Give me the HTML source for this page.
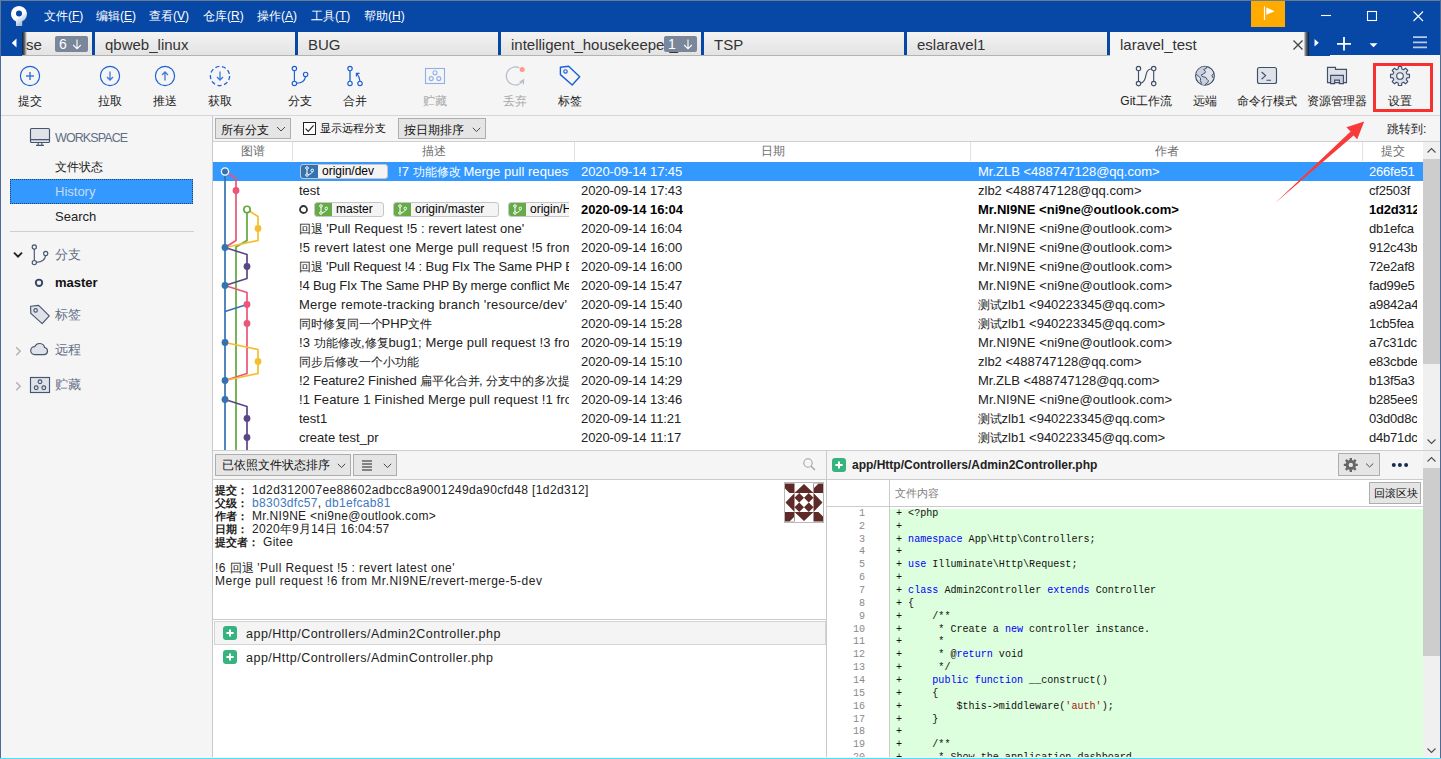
<!DOCTYPE html>
<html lang="zh">
<head>
<meta charset="utf-8">
<title>Sourcetree</title>
<style>
*{box-sizing:border-box;margin:0;padding:0}
html,body{width:1441px;height:759px;overflow:hidden;background:#f5f5f5}
body{position:relative;font-family:"Liberation Sans",sans-serif;font-size:13px;color:#222;line-height:1}
.abs,.abs-all *{position:absolute}
div,span,svg{position:absolute}
.t{white-space:nowrap}
/* frame */
#bL{left:0;top:0;width:1px;height:759px;background:linear-gradient(#687d90,#4d6b94 60px)}
#bR{left:1440px;top:0;width:1px;height:759px;background:#4d6b94}
#bT{left:0;top:0;width:1441px;height:1px;background:#687d90}
#bB{left:0;top:758px;width:1441px;height:1px;background:#48e4fb}
/* title */
#title{left:1px;top:1px;width:1439px;height:54px;background:#0747a6}
.menu{top:10px;color:#fff;font-size:12px;white-space:nowrap}
.menu u{text-decoration:underline;text-underline-offset:1px}
/* tabs */
.tab{top:32px;height:23px;width:200px;background:linear-gradient(#f3f3f3,#e3e3e3);overflow:hidden}
.tab .t{left:10px;top:5px;font-size:15px;color:#333}
.badge{top:4px;height:16px;background:#7a869a;border-radius:2px;color:#fff;font-size:13px}
/* toolbar */
#toolbar{left:1px;top:56px;width:1439px;height:59px;background:#f5f5f5}
.tl{top:95px;font-size:12px;color:#222;white-space:nowrap;transform:translateX(-50%)}
.tl.dis{color:#a8a8a8}
#tbline{left:1px;top:115px;width:1439px;height:1px;background:#d6d6d6}
/* sidebar */
.sb{left:55px;white-space:nowrap}
.sbh{color:#616e86;font-size:13px}
.ws{font-size:12.5px;letter-spacing:-0.9px}
/* list */
.dd{background:#e5e5e5;border:1px solid #adadad;font-size:12px;color:#111}
.hd{top:145px;font-size:12px;color:#6e6e6e;white-space:nowrap;transform:translateX(-50%)}
.r{left:213px;width:1210px;height:19px;font-size:13px;line-height:19px;color:#222}
.dt{letter-spacing:-.1px}
.ni{letter-spacing:.14px}
.bd .ni{letter-spacing:.04px}
.ch{letter-spacing:-.2px}
.r .t{top:0}
.r.sel{color:#fff}
.r.bd{font-weight:bold;color:#000}
i{font-style:normal;font-size:11.8px;display:inline-block;white-space:nowrap}
.cd{left:79px;top:0;width:277px;height:19px;overflow:hidden}
.ch{left:1149px;top:0;width:55px;height:19px;overflow:hidden}
.tg{top:2px;height:15px;background:#f4f4f4;border:1px solid #c6c6c6;border-radius:3px;overflow:hidden}
.tg b{position:absolute;left:-1px;top:-1px;width:18px;height:15px}
.tg .bi{left:4px;top:1px}
.tg em{position:absolute;font-style:normal;font-size:12px;font-weight:normal;color:#000;left:21px;top:0;line-height:13px;white-space:nowrap}
/* bottom */
.il{left:215px;font-size:11px;font-weight:bold;color:#222;white-space:nowrap;line-height:13px}
.iv{font-size:12px;color:#222;white-space:nowrap;line-height:13px;letter-spacing:.3px}
.iv a{color:#4078c0}
.iv i{font-size:12px}
.fn{font-size:12.5px;color:#222;letter-spacing:.49px}
.ln{left:0;width:38px;text-align:right;font-family:"Liberation Mono",monospace;font-size:10.08px;line-height:12.86px;color:#8a8a8a}
.cl{left:69px;font-family:"Liberation Mono",monospace;font-size:10.08px;line-height:12.86px;color:#111;white-space:pre}
k{color:#0000ff}
s{color:#a31515;text-decoration:none}
</style>
</head>
<body>
<!-- title bar -->
<div id="title"></div><div style="left:1px;top:55px;width:21px;height:1px;background:#0747a6"></div><div style="left:1309px;top:55px;width:21px;height:1px;background:#0747a6"></div>
<!-- logo -->
<svg style="left:10px;top:5px" width="20" height="22" viewBox="0 0 20 22"><defs><linearGradient id="lg" x1="0.3" y1="0" x2="0.9" y2="1"><stop offset="0.45" stop-color="#fff"/><stop offset="1" stop-color="#7f9fd2"/></linearGradient></defs><path d="M9 1a8 8 0 0 1 3.2 15.3V21H6V16.4A8 8 0 0 1 9 1Z" fill="url(#lg)"/><circle cx="9" cy="8.6" r="3" fill="#0747a6"/></svg>
<span class="menu" style="left:44px">文件(<u>F</u>)</span>
<span class="menu" style="left:96px">编辑(<u>E</u>)</span>
<span class="menu" style="left:149px">查看(<u>V</u>)</span>
<span class="menu" style="left:203px">仓库(<u>R</u>)</span>
<span class="menu" style="left:257px">操作(<u>A</u>)</span>
<span class="menu" style="left:311px">工具(<u>T</u>)</span>
<span class="menu" style="left:364px">帮助(<u>H</u>)</span>
<!-- flag + window buttons -->
<div style="left:1251px;top:1px;width:34px;height:26px;background:#ffab00"></div>
<svg style="left:1251px;top:1px" width="34" height="26" viewBox="0 0 34 26"><path d="M13.5 5.5V19" stroke="#fff" stroke-width="1.2" fill="none"/><path d="M15.3 6.6L23.6 10.2L15.3 13.8Z" fill="#fff"/></svg>
<svg style="left:1315px;top:5px" width="115" height="22" viewBox="0 0 115 22"><g stroke="#fff" stroke-width="1.1" fill="none"><path d="M6 10.5H16"/><rect x="52.5" y="6.5" width="9" height="9"/><path d="M98.5 6.5L108 16M108 6.5L98.5 16"/></g></svg>
<div class="tab" style="left:22px;width:70px"><span class="t" style="left:4px">se</span><span class="badge" style="left:33px;width:33px"></span><span class="t" style="left:37px;top:5px;font-size:14px;color:#fff">6</span><svg style="left:50px;top:7px" width="10" height="11" viewBox="0 0 10 11"><path d="M5 0.5V9.5M1.2 6L5 9.8L8.8 6" stroke="#fff" stroke-width="1.1" fill="none"/></svg></div>
<div style="left:22px;top:32px;width:5px;height:24px;background:linear-gradient(90deg,#111c2c,#4f5a68 45%,rgba(200,200,200,0))"></div>
<svg style="left:11px;top:38px" width="7" height="10" viewBox="0 0 7 10"><path d="M5.5 0.5V9.5L0.8 5Z" fill="#fff"/></svg>
<div class="tab" style="left:95px"><span class="t">qbweb_linux</span></div>
<div class="tab" style="left:298px"><span class="t">BUG</span></div>
<div class="tab" style="left:501px"><span class="t">intelligent_housekeeper_</span><span class="badge" style="left:163px;width:33px"></span><span class="t" style="left:167px;top:5px;font-size:14px;color:#fff">1</span><svg style="left:182px;top:7px" width="10" height="11" viewBox="0 0 10 11"><path d="M5 0.5V9.5M1.2 6L5 9.8L8.8 6" stroke="#fff" stroke-width="1.1" fill="none"/></svg></div>
<div class="tab" style="left:704px"><span class="t">TSP</span></div>
<div class="tab" style="left:907px"><span class="t">eslaravel1</span></div>
<div class="tab" style="left:1110px;width:195px;height:24px;background:#f5f5f5"><span class="t">laravel_test</span></div>
<div style="left:1304px;top:32px;width:5px;height:24px;background:linear-gradient(90deg,#dcdcdc,#5e6a7a 40%,#101b2c)"></div>
<svg style="left:1292px;top:39px" width="12" height="12" viewBox="0 0 12 12"><path d="M1.5 1.5L10.5 10.5M10.5 1.5L1.5 10.5" stroke="#444" stroke-width="1.3" fill="none"/></svg>
<svg style="left:1312px;top:34px" width="120" height="20" viewBox="0 0 120 20"><path d="M2.5 5V12.6L6.8 8.8Z" fill="#fff"/><path d="M25 9.8H39M32 3V16.6" stroke="#fff" stroke-width="1.8" fill="none"/><path d="M57.5 9.2H65.5L61.5 13.2Z" fill="#fff"/><path d="M101 3.2H115M101 8.3H115M101 13.3H115" stroke="#b9c9e6" stroke-width="1.8" fill="none"/></svg>
<!-- TOOLBAR -->
<div id="toolbar"></div>
<div id="tabline" style="left:22px;top:55px;width:1088px;height:1px;background:#b4b4b4"></div>
<svg id="tbicons" style="left:0;top:56px" width="1441" height="59" viewBox="0 56 1441 59" fill="none">
<g stroke="#1a5fd6" stroke-width="1.15">
<circle cx="30" cy="76" r="9.6"/><path d="M26 76H34M30 72V80" stroke="#3d78de" stroke-width="1.5"/>
<circle cx="110" cy="76" r="9.6"/><path d="M110 71.5V79.5M107 77L110 80L113 77" stroke="#3d78de" stroke-width="1.3"/>
<circle cx="165" cy="76" r="9.6"/><path d="M165 80.5V72.5M162 75L165 72L168 75" stroke="#3d78de" stroke-width="1.3"/>
<circle cx="220" cy="76" r="9.6" stroke-dasharray="4.1 2.6" stroke-width="1.3"/><path d="M220 71.5V79.5M217 77L220 80L223 77" stroke="#3d78de" stroke-width="1.3"/>
<circle cx="294.4" cy="68.6" r="2.2"/><circle cx="294.4" cy="83.4" r="2.2"/><circle cx="305.6" cy="74.4" r="2.2"/><path d="M294.4 70.8V81.2M296.6 83.3C301.5 83 305 80.5 305.5 76.6"/>
<circle cx="350" cy="68.6" r="2.2"/><circle cx="350" cy="83.4" r="2.2"/><circle cx="360" cy="83.4" r="2.2"/><path d="M350 70.8V81.2" stroke-width="1.6" stroke="#3d78de"/><path d="M360 81.2C359.6 78 358.6 75.6 356.9 73.6M356.4 76.6V73.3H359.6"/>
<path d="M560.4 67.2L568.6 66.3L579.7 76.7L572.2 85L560.4 74.6Z" stroke-width="1.4" stroke-linejoin="round"/><circle cx="565.5" cy="71.4" r="1.7"/>
</g>
<g stroke="#8fb0ea" stroke-width="1.1"><rect x="425.5" y="68.5" width="19" height="15"/><circle cx="435" cy="72.7" r="2"/><circle cx="431.2" cy="78.6" r="2"/><circle cx="438.8" cy="78.6" r="2"/></g>
<path d="M519.3 67.9A9 9 0 1 0 523.3 80.2M519.6 82.2L523.6 79.8L523.4 84.4" stroke="#b5bcc8" stroke-width="1.2"/><circle cx="522.2" cy="69.6" r="2.5" fill="#ff9a84"/>
<g stroke="#3f4f6c" stroke-width="1.15">
<circle cx="1138.5" cy="68.5" r="2.2"/><circle cx="1138.5" cy="83.6" r="2.2"/><circle cx="1153.7" cy="68.5" r="2.2"/><circle cx="1153.7" cy="83.6" r="2.2"/><path d="M1138.5 70.7V81.4M1153.7 70.7V81.4M1140.6 83.2C1148.8 81.4 1142.6 70.2 1151.5 68.8"/>
<circle cx="1205" cy="75.8" r="9.4" fill="#dfe2e9"/><path d="M1206.6 66.6L1206.2 68.5L1203.7 69.4L1205.5 71.6L1204.8 73.1L1201.1 75.1L1202.2 76.4L1205.9 77.5L1207 79.3L1208.5 80.8L1207.7 82.7L1204.8 85L1201.4 84.2L1200.3 80.5L1200.7 78.2L1199.2 76.8L1196.2 74.2A9.4 9.4 0 0 1 1206.6 66.6Z" fill="#cbd0dc" stroke="none"/><path d="M1206.6 66.6L1206.2 68.5L1203.7 69.4L1205.5 71.6L1204.8 73.1L1201.1 75.1L1202.2 76.4L1205.9 77.5L1207 79.3L1208.5 80.8L1207.7 82.7L1204.6 84.9M1196.2 74.2L1199.2 76.8L1200.7 78.2L1200.3 80.5L1201.6 83.6M1213.8 73.6L1211.8 75.3L1213 78" stroke-width="1"/>
<rect x="1257.5" y="67.5" width="19" height="16" rx="2" fill="#dfe2e9"/><path d="M1261.6 72L1265.6 75.6L1261.6 79.2M1266.5 80.2H1271"/>
<path d="M1327.5 82.6V67.4H1335.5V69.4H1346.5V82.6Z" fill="#dfe2e9"/><path d="M1330.6 83.6V75.4H1343.4V83.6H1339.4V80.1H1334.6V83.6Z" fill="#c9ceda"/>
<path id="gear" fill="#dfe2e9" stroke-linejoin="round" d="M1398.14 69.05L1398.42 66.53L1401.58 66.53L1401.86 69.05L1403.60 69.76L1405.57 68.18L1407.82 70.43L1406.24 72.40L1406.95 74.14L1409.47 74.42L1409.47 77.58L1406.95 77.86L1406.24 79.60L1407.82 81.57L1405.57 83.82L1403.60 82.24L1401.86 82.95L1401.58 85.47L1398.42 85.47L1398.14 82.95L1396.40 82.24L1394.43 83.82L1392.18 81.57L1393.76 79.60L1393.05 77.86L1390.53 77.58L1390.53 74.42L1393.05 74.14L1393.76 72.40L1392.18 70.43L1394.43 68.18L1396.40 69.76Z"/><circle cx="1400" cy="76" r="3.3" fill="#f5f5f5"/>
</g>
</svg>
<span class="tl" style="left:30px">提交</span><span class="tl" style="left:110px">拉取</span><span class="tl" style="left:165px">推送</span><span class="tl" style="left:220px">获取</span>
<span class="tl" style="left:300px">分支</span><span class="tl" style="left:355px">合并</span><span class="tl dis" style="left:435px">贮藏</span><span class="tl dis" style="left:515px">丢弃</span><span class="tl" style="left:570px">标签</span>
<span class="tl" style="left:1146px">Git工作流</span><span class="tl" style="left:1205px">远端</span><span class="tl" style="left:1267px">命令行模式</span><span class="tl" style="left:1337px">资源管理器</span><span class="tl" style="left:1400px">设置</span>
<div style="left:1373px;top:63px;width:60px;height:49px;border:3px solid #f93030"></div>
<div id="tbline"></div>
<div id="sbline" style="left:212px;top:116px;width:1px;height:641px;background:#c9c9c9"></div>
<svg style="left:0;top:116px" width="212" height="300" viewBox="0 116 212 300" fill="none">
<g stroke="#46556f" stroke-width="1.15">
<rect x="30.5" y="128.5" width="19" height="14" rx="1" fill="#dfe2e9"/><path d="M30.5 139.6H49.5M38.2 142.6V145.3M41.8 142.6V145.3M36 145.4H44"/>
<circle cx="34.3" cy="247" r="2.1"/><circle cx="34.3" cy="262.6" r="2.1"/><circle cx="45.7" cy="253.5" r="2.1"/><path d="M34.3 249.1V260.5M36.4 262.4C41.5 262 45 259.5 45.6 255.6"/>
<path d="M30.6 306.2L38.6 305.4L49.3 315.8L42.2 323.6L30.8 313.4Z" fill="#dfe2e9" stroke-linejoin="round"/><circle cx="35.6" cy="310.4" r="1.7" fill="#f5f5f5"/>
<path d="M34.6 354.6H44.4A3.6 3.6 0 0 0 44.6 347.5A5.2 5.2 0 0 0 34.8 346.6A4 4 0 0 0 34.6 354.6Z" fill="#dfe2e9"/>
<rect x="30.5" y="377.5" width="19" height="15" fill="#dfe2e9"/><circle cx="40" cy="381.8" r="1.9"/><circle cx="36.2" cy="387.8" r="1.9"/><circle cx="43.8" cy="387.8" r="1.9"/>
</g>
<path d="M14 252.6L18 256.6L22 252.6" stroke="#222" stroke-width="1.9"/>
<path d="M16.2 347.2L20.2 351.2L16.2 355.2M16.2 382.2L20.2 386.2L16.2 390.2" stroke="#b3b3b3" stroke-width="1.5"/>
<circle cx="39" cy="282.8" r="3.2" stroke="#344563" stroke-width="1.9"/>
</svg>
<span class="sb sbh ws" style="top:132px">WORKSPACE</span>
<span class="sb" style="top:161px;font-size:12px;color:#222">文件状态</span>
<div style="left:10px;top:179px;width:183px;height:25px;background:#3399ff;border:1px dotted #1f3f66"></div>
<span class="sb" style="top:185px;font-size:13px;color:#c9daf0">History</span>
<span class="sb" style="top:210px;font-size:13px;color:#222">Search</span>
<div style="left:10px;top:231px;width:184px;height:1px;background:#cfcfcf"></div>
<span class="sb sbh" style="top:248px">分支</span>
<span class="sb" style="top:276px;font-size:13px;font-weight:bold;color:#111">master</span>
<span class="sb sbh" style="top:308px">标签</span>
<span class="sb sbh" style="top:343px">远程</span>
<span class="sb sbh" style="top:378px">贮藏</span>
<!-- LIST-START -->
<div id="list" style="left:213px;top:116px;width:1227px;height:335px;background:#f5f5f5"></div>
<div id="listbg" style="left:213px;top:142px;width:1210px;height:308px;background:#fff"></div>
<div class="dd" style="left:215px;top:118px;width:76px;height:21px"><span class="t" style="left:5px;top:5px">所有分支</span><svg style="left:60px;top:7px" width="10" height="6" viewBox="0 0 10 6"><path d="M1 1L5 5L9 1" stroke="#484848" stroke-width="1" fill="none"/></svg></div>
<div style="left:303px;top:122px;width:13px;height:13px;background:#fff;border:1px solid #222"></div><svg style="left:303px;top:122px" width="13" height="13" viewBox="0 0 13 13"><path d="M2.6 6.6L5.2 9.4L10.6 3.4" stroke="#222" stroke-width="1.1" fill="none"/></svg>
<span class="t" style="left:320px;top:123px;font-size:11px;color:#111">显示远程分支</span>
<div class="dd" style="left:398px;top:118px;width:88px;height:21px"><span class="t" style="left:5px;top:5px">按日期排序</span><svg style="left:73px;top:8px" width="9" height="6" viewBox="0 0 9 6"><path d="M0.8 0.8L4.5 4.6L8.2 0.8" stroke="#484848" stroke-width="1" fill="none"/></svg></div>
<span class="t" style="left:1387px;top:123px;font-size:12px;color:#222">跳转到:</span>
<div style="left:213px;top:141px;width:1227px;height:1px;background:#d0d0d0"></div>
<div style="left:292px;top:142px;width:1px;height:19px;background:#e2e2e2"></div>
<div style="left:574px;top:142px;width:1px;height:19px;background:#e2e2e2"></div>
<div style="left:970px;top:142px;width:1px;height:19px;background:#e2e2e2"></div>
<div style="left:1362px;top:142px;width:1px;height:19px;background:#e2e2e2"></div>
<span class="hd" style="left:253px">图谱</span>
<span class="hd" style="left:434px">描述</span>
<span class="hd" style="left:773px">日期</span>
<span class="hd" style="left:1167px">作者</span>
<span class="hd" style="left:1393px">提交</span>
<div style="left:213px;top:162px;width:1210px;height:19px;background:#3399ff"></div>
<div class="r sel" style="top:162px"><div class="cd"><span class="tg" style="left:8px;width:88px"><b style="background:#3572b0"></b><svg class="bi" width="9" height="11" viewBox="0 0 9 11"><g fill="none" stroke="#fff" stroke-width="1"><circle cx="2" cy="2" r="1.3"/><circle cx="2" cy="9" r="1.3"/><circle cx="7.3" cy="4.4" r="1.3"/><path d="M2 3.3V7.7M3.2 8.6C5.6 8.2 7 7.2 7.3 5.7"/></g></svg><em>origin/dev</em></span><span class="t" style="left:106px;letter-spacing:.03px">!7 <i style="width:47.2px">功能修改</i> Merge pull request !7 from</span></div><span class="t dt" style="left:368px">2020-09-14 17:45</span><span class="t" style="left:765px">Mr.ZLB &lt;488747128@qq.com&gt;</span><div class="ch"><span class="t" style="left:7px">266fe51</span></div></div>
<div class="r" style="top:181px"><div class="cd"><span class="t" style="left:7px;letter-spacing:0px">test</span></div><span class="t dt" style="left:368px">2020-09-14 17:43</span><span class="t" style="left:765px">zlb2 &lt;488747128@qq.com&gt;</span><div class="ch"><span class="t" style="left:7px">cf2503f</span></div></div>
<div class="r bd" style="top:200px"><div class="cd"><svg style="left:6px;top:4px" width="11" height="11" viewBox="0 0 11 11"><circle cx="5.5" cy="5.5" r="3.5" fill="none" stroke="#333" stroke-width="1.8"/></svg><span class="tg" style="left:22px;width:70px"><b style="background:#65ab47"></b><svg class="bi" width="9" height="11" viewBox="0 0 9 11"><g fill="none" stroke="#fff" stroke-width="1"><circle cx="2" cy="2" r="1.3"/><circle cx="2" cy="9" r="1.3"/><circle cx="7.3" cy="4.4" r="1.3"/><path d="M2 3.3V7.7M3.2 8.6C5.6 8.2 7 7.2 7.3 5.7"/></g></svg><em>master</em></span><span class="tg" style="left:101px;width:106px"><b style="background:#65ab47"></b><svg class="bi" width="9" height="11" viewBox="0 0 9 11"><g fill="none" stroke="#fff" stroke-width="1"><circle cx="2" cy="2" r="1.3"/><circle cx="2" cy="9" r="1.3"/><circle cx="7.3" cy="4.4" r="1.3"/><path d="M2 3.3V7.7M3.2 8.6C5.6 8.2 7 7.2 7.3 5.7"/></g></svg><em>origin/master</em></span><span class="tg" style="left:216px;width:90px"><b style="background:#65ab47"></b><svg class="bi" width="9" height="11" viewBox="0 0 9 11"><g fill="none" stroke="#fff" stroke-width="1"><circle cx="2" cy="2" r="1.3"/><circle cx="2" cy="9" r="1.3"/><circle cx="7.3" cy="4.4" r="1.3"/><path d="M2 3.3V7.7M3.2 8.6C5.6 8.2 7 7.2 7.3 5.7"/></g></svg><em>origin/HEAD</em></span></div><span class="t dt" style="left:368px">2020-09-14 16:04</span><span class="t ni" style="left:765px">Mr.NI9NE &lt;ni9ne@outlook.com&gt;</span><div class="ch"><span class="t" style="left:7px">1d2d312</span></div></div>
<div class="r" style="top:219px"><div class="cd"><span class="t" style="left:7px;letter-spacing:0.025px"><i style="width:23.6px">回退</i> 'Pull Request !5 : revert latest one'</span></div><span class="t dt" style="left:368px">2020-09-14 16:04</span><span class="t ni" style="left:765px">Mr.NI9NE &lt;ni9ne@outlook.com&gt;</span><div class="ch"><span class="t" style="left:7px">db1efca</span></div></div>
<div class="r" style="top:238px"><div class="cd"><span class="t" style="left:7px;letter-spacing:0.246px">!5 revert latest one Merge pull request !5 from Mr.NI9NE</span></div><span class="t dt" style="left:368px">2020-09-14 16:00</span><span class="t ni" style="left:765px">Mr.NI9NE &lt;ni9ne@outlook.com&gt;</span><div class="ch"><span class="t" style="left:7px">912c43b</span></div></div>
<div class="r" style="top:257px"><div class="cd"><span class="t" style="left:7px;letter-spacing:-0.105px"><i style="width:23.6px">回退</i> 'Pull Request !4 : Bug FIx The Same PHP By merge</span></div><span class="t dt" style="left:368px">2020-09-14 16:00</span><span class="t ni" style="left:765px">Mr.NI9NE &lt;ni9ne@outlook.com&gt;</span><div class="ch"><span class="t" style="left:7px">72e2af8</span></div></div>
<div class="r" style="top:276px"><div class="cd"><span class="t" style="left:7px;letter-spacing:-0.129px">!4 Bug FIx The Same PHP By merge conflict Merge pull</span></div><span class="t dt" style="left:368px">2020-09-14 15:47</span><span class="t ni" style="left:765px">Mr.NI9NE &lt;ni9ne@outlook.com&gt;</span><div class="ch"><span class="t" style="left:7px">fad99e5</span></div></div>
<div class="r" style="top:295px"><div class="cd"><span class="t" style="left:7px;letter-spacing:0.24px">Merge remote-tracking branch 'resource/dev'</span></div><span class="t dt" style="left:368px">2020-09-14 15:40</span><span class="t" style="left:765px"><i style="width:23.6px">测试</i>zlb1 &lt;940223345@qq.com&gt;</span><div class="ch"><span class="t" style="left:7px">a9842a4</span></div></div>
<div class="r" style="top:314px"><div class="cd"><span class="t" style="left:7px;letter-spacing:0px"><i style="width:82.6px">同时修复同一个</i>PHP<i style="width:23.6px">文件</i></span></div><span class="t dt" style="left:368px">2020-09-14 15:28</span><span class="t" style="left:765px"><i style="width:23.6px">测试</i>zlb1 &lt;940223345@qq.com&gt;</span><div class="ch"><span class="t" style="left:7px">1cb5fea</span></div></div>
<div class="r" style="top:333px"><div class="cd"><span class="t" style="left:7px;letter-spacing:0.143px">!3 <i style="width:47.2px">功能修改</i>,<i style="width:23.6px">修复</i>bug1; Merge pull request !3 from Mr</span></div><span class="t dt" style="left:368px">2020-09-14 15:19</span><span class="t ni" style="left:765px">Mr.NI9NE &lt;ni9ne@outlook.com&gt;</span><div class="ch"><span class="t" style="left:7px">a7c31dc</span></div></div>
<div class="r" style="top:352px"><div class="cd"><span class="t" style="left:7px;letter-spacing:0px"><i style="width:118.0px">同步后修改一个小功能</i></span></div><span class="t dt" style="left:368px">2020-09-14 15:10</span><span class="t" style="left:765px">zlb2 &lt;488747128@qq.com&gt;</span><div class="ch"><span class="t" style="left:7px">e83cbde</span></div></div>
<div class="r" style="top:371px"><div class="cd"><span class="t" style="left:7px;letter-spacing:-0.085px">!2 Feature2 Finished <i style="width:59.0px">扁平化合并</i>, <i style="width:94.4px">分支中的多次提交</i></span></div><span class="t dt" style="left:368px">2020-09-14 14:29</span><span class="t" style="left:765px">Mr.ZLB &lt;488747128@qq.com&gt;</span><div class="ch"><span class="t" style="left:7px">b13f5a3</span></div></div>
<div class="r" style="top:390px"><div class="cd"><span class="t" style="left:7px;letter-spacing:0.12px">!1 Feature 1 Finished Merge pull request !1 from Mr</span></div><span class="t dt" style="left:368px">2020-09-14 13:46</span><span class="t ni" style="left:765px">Mr.NI9NE &lt;ni9ne@outlook.com&gt;</span><div class="ch"><span class="t" style="left:7px">b285ee9</span></div></div>
<div class="r" style="top:409px"><div class="cd"><span class="t" style="left:7px;letter-spacing:0px">test1</span></div><span class="t dt" style="left:368px">2020-09-14 11:21</span><span class="t" style="left:765px"><i style="width:23.6px">测试</i>zlb1 &lt;940223345@qq.com&gt;</span><div class="ch"><span class="t" style="left:7px">03d0d8c</span></div></div>
<div class="r" style="top:428px"><div class="cd"><span class="t" style="left:7px;letter-spacing:0px">create test_pr</span></div><span class="t dt" style="left:368px">2020-09-14 11:17</span><span class="t" style="left:765px"><i style="width:23.6px">测试</i>zlb1 &lt;940223345@qq.com&gt;</span><div class="ch"><span class="t" style="left:7px">d4b71dc</span></div></div>
<div style="left:1423px;top:142px;width:17px;height:308px;background:#f0f0f0"></div><div style="left:1423px;top:159px;width:17px;height:205px;background:#cdcdcd"></div>
<svg style="left:1423px;top:142px" width="17" height="308" viewBox="0 0 17 308"><path d="M4.5 10.5L8.5 6.5L12.5 10.5M4.5 297.5L8.5 301.5L12.5 297.5" stroke="#505050" stroke-width="1.1" fill="none"/></svg>
<div style="left:213px;top:450px;width:1227px;height:1px;background:#cfcfcf"></div>
<svg id="graph" style="left:213px;top:162px" width="79" height="288" viewBox="213 162 79 288" fill="none" stroke-width="1.7" stroke-linejoin="round">
<path d="M247 209.5V240.5L236 247.0V451" stroke="#5fa83c"/>
<path d="M225 171.5L236 178.5V240.5L225 247.5" stroke="#ea5578"/>
<path d="M247 209.5L258 216.5V240.5L225 247.5" stroke="#f5be31"/>
<path d="M225 247.5L247 254.5V278.5L225 285.5" stroke="#5c4587"/>
<path d="M225 285.5L247 292.5V373.5L225 380.5" stroke="#ea5578"/>
<path d="M247 304.5L225 311.5" stroke="#3572b0"/>
<path d="M225 342.5L258 349.5V373.5L225 380.5" stroke="#f5be31"/>
<path d="M225 399.5L247 406.5V451" stroke="#5c4587"/>
<path d="M225 171.5V451" stroke="#3572b0"/>
<circle cx="225" cy="171.5" r="3.6" fill="#3572b0" stroke="#fff" stroke-width="1.3"/>
<circle cx="236" cy="190.5" r="3.4" fill="#ea5578"/>
<circle cx="247" cy="209.5" r="3.2" fill="#fff" stroke="#5fa83c" stroke-width="1.6"/>
<circle cx="258" cy="228.5" r="3.4" fill="#f5be31"/>
<circle cx="225" cy="247.5" r="3.4" fill="#3572b0"/>
<circle cx="247" cy="266.5" r="3.4" fill="#5c4587"/>
<circle cx="225" cy="285.5" r="3.4" fill="#3572b0"/>
<circle cx="247" cy="304.5" r="3.4" fill="#ea5578"/>
<circle cx="247" cy="323.5" r="3.4" fill="#ea5578"/>
<circle cx="225" cy="342.5" r="3.4" fill="#3572b0"/>
<circle cx="258" cy="361.5" r="3.4" fill="#f5be31"/>
<circle cx="225" cy="380.5" r="3.4" fill="#3572b0"/>
<circle cx="225" cy="399.5" r="3.4" fill="#3572b0"/>
<circle cx="247" cy="418.5" r="3.4" fill="#5c4587"/>
<circle cx="247" cy="437.5" r="3.4" fill="#5c4587"/>
</svg>
<!-- LIST-END -->
<!-- BL-START -->
<div style="left:213px;top:451px;width:613px;height:306px;background:#fff"></div>
<div style="left:213px;top:451px;width:613px;height:28px;background:#f5f5f5"></div>
<div class="dd" style="left:215px;top:454px;width:136px;height:22px"><span class="t" style="left:6px;top:4px">已依照文件状态排序</span><svg style="left:121px;top:8px" width="9" height="6" viewBox="0 0 9 6"><path d="M0.8 0.8L4.5 4.6L8.2 0.8" stroke="#484848" stroke-width="1" fill="none"/></svg></div>
<div class="dd" style="left:353px;top:454px;width:44px;height:22px"><svg style="left:8px;top:5px" width="30" height="11" viewBox="0 0 30 11"><path d="M0 1H10M0 4H10M0 7H10M0 10H10" stroke="#222" stroke-width="1.1"/><path d="M21.8 3.8L25.5 7.6L29.2 3.8" stroke="#484848" stroke-width="1" fill="none"/></svg></div>
<svg style="left:802px;top:457px" width="15" height="15" viewBox="0 0 15 15"><circle cx="6" cy="6" r="4.2" fill="none" stroke="#a3a3a3" stroke-width="1.1"/><path d="M9 9.2L13 13" stroke="#a3a3a3" stroke-width="1.3"/></svg>
<div style="left:213px;top:479px;width:1210px;height:1px;background:#cbcbcb"></div>
<span class="il" style="top:484px">提交：</span>
<span class="iv" id="iv0" style="letter-spacing:.37px;left:252px;top:484px">1d2d312007ee88602adbcc8a9001249da90cfd48 [1d2d312]</span>
<span class="il" style="top:497px">父级：</span>
<span class="iv" id="iv1" style="left:252px;top:497px"><a>b8303dfc57</a>, <a>db1efcab81</a></span>
<span class="il" style="top:510px">作者：</span>
<span class="iv" id="iv2" style="left:252px;top:510px">Mr.NI9NE &lt;ni9ne@outlook.com&gt;</span>
<span class="il" style="top:523px">日期：</span>
<span class="iv" id="iv3" style="left:252px;top:523px">2020<i style="width:12px">年</i>9<i style="width:12px">月</i>14<i style="width:12px">日</i> 16:04:57</span>
<span class="il" style="top:536px">提交者：</span>
<span class="iv" id="iv4" style="left:263px;top:536px">Gitee</span>
<span class="iv" id="iv6" style="letter-spacing:.42px;left:215px;top:562px">!6 <i style="width:24px">回退</i> 'Pull Request !5 : revert latest one'</span>
<span class="iv" id="iv7" style="letter-spacing:.48px;left:215px;top:575px">Merge pull request !6 from Mr.NI9NE/revert-merge-5-dev</span>
<svg style="left:784px;top:482px" width="40" height="41" viewBox="0 0 40 41"><rect x="0.5" y="0.5" width="39" height="40" fill="#fff" stroke="#b9b9b9"/><g transform="translate(1,1.5)" fill="#5e2a27"><path d="M0 0H9.5V9.5H0Z M28.5 0H38V9.5H28.5Z M0 28.5H9.5V38H0Z M28.5 28.5H38V38H28.5Z"/><path d="M19 0.5L28.5 9.5H9.5Z M19 37.5L9.5 28.5H28.5Z M0.5 19L9.5 9.5V28.5Z M37.5 19L28.5 28.5V9.5Z"/><path d="M14.25 9.5L19 14.25L14.25 19L9.5 14.25Z M23.75 9.5L28.5 14.25L23.75 19L19 14.25Z M14.25 19L19 23.75L14.25 28.5L9.5 23.75Z M23.75 19L28.5 23.75L23.75 28.5L19 23.75Z"/><path d="M0 5L4.5 9.5H0Z M29 0H33.5L29 4.5Z M38 33L33.5 28.5H38Z M9 38H4.5L9 33.5Z" fill="#fff"/></g></svg>
<div style="left:213px;top:619px;width:613px;height:1px;background:#cbcbcb"></div>
<div style="left:214px;top:621px;width:612px;height:24px;background:#f4f4f4;border:1px solid #d4d4d4"></div>
<svg style="left:223px;top:626px" width="14" height="14" viewBox="0 0 14 14"><rect width="14" height="14" rx="3" fill="#36b37e"/><path d="M7 3.4V10.6M3.4 7H10.6" stroke="#fff" stroke-width="2"/></svg>
<span class="t fn" style="left:246px;top:627.5px">app/Http/Controllers/Admin2Controller.php</span>
<svg style="left:223px;top:650px" width="14" height="14" viewBox="0 0 14 14"><rect width="14" height="14" rx="3" fill="#36b37e"/><path d="M7 3.4V10.6M3.4 7H10.6" stroke="#fff" stroke-width="2"/></svg>
<span class="t fn" style="left:246px;top:652.2px">app/Http/Controllers/AdminController.php</span>
<div style="left:826px;top:451px;width:1px;height:306px;background:#c9c9c9"></div>
<!-- BL-END -->
<!-- DIFF-START -->
<div style="left:827px;top:451px;width:596px;height:28px;background:#f5f5f5"></div>
<div style="left:827px;top:480px;width:596px;height:277px;background:#fff"></div>
<svg style="left:832px;top:458px" width="14" height="14" viewBox="0 0 14 14"><rect width="14" height="14" rx="3" fill="#36b37e"/><path d="M7 3.4V10.6M3.4 7H10.6" stroke="#fff" stroke-width="2"/></svg>
<span class="t" id="dfn" style="left:852px;top:459px;font-size:12px;font-weight:bold;color:#222">app/Http/Controllers/Admin2Controller.php</span>
<div class="dd" style="left:1338px;top:453px;width:42px;height:23px"></div>
<svg style="left:1343px;top:457px" width="32" height="16" viewBox="0 0 32 16"><g transform="translate(7.8,7.9)"><circle r="3.7" fill="none" stroke="#666" stroke-width="3"/><g stroke="#666" stroke-width="2.4"><path d="M0 -7V-4.6M0 7V4.6M-7 0H-4.6M7 0H4.6M-4.95 -4.95L-3.3 -3.3M4.95 4.95L3.3 3.3M-4.95 4.95L-3.3 3.3M4.95 -4.95L3.3 -3.3"/></g></g><path d="M23 6.5L26.6 10L30.2 6.5" stroke="#484848" stroke-width="1" fill="none"/></svg>
<svg style="left:1390px;top:461px" width="20" height="8" viewBox="0 0 20 8"><circle cx="3.8" cy="4" r="2" fill="#172b4d"/><circle cx="9.9" cy="4" r="2" fill="#172b4d"/><circle cx="16.1" cy="4" r="2" fill="#172b4d"/></svg>
<span class="t" style="left:895px;top:488px;font-size:11px;color:#7d7d7d">文件内容</span>
<div class="dd" style="left:1369px;top:482px;width:52px;height:22px"><span class="t" style="left:4px;top:5px;font-size:11px">回滚区块</span></div>
<div style="left:827px;top:506px;width:596px;height:1px;background:#cbcbcb"></div>
<div style="left:889px;top:480px;width:1px;height:277px;background:#cbcbcb"></div>
<div style="left:890px;top:509px;width:533px;height:248px;background:#ddffdd"></div>
<div id="code" style="left:827px;top:480px;width:596px;height:277px;overflow:hidden">
<span class="ln" style="top:27.8px">1</span><span class="cl" style="top:27.8px">+ &lt;?php</span>
<span class="ln" style="top:40.66px">2</span><span class="cl" style="top:40.66px">+ </span>
<span class="ln" style="top:53.52px">3</span><span class="cl" style="top:53.52px">+ <k>namespace</k> App\Http\Controllers;</span>
<span class="ln" style="top:66.38px">4</span><span class="cl" style="top:66.38px">+ </span>
<span class="ln" style="top:79.24px">5</span><span class="cl" style="top:79.24px">+ <k>use</k> Illuminate\Http\Request;</span>
<span class="ln" style="top:92.1px">6</span><span class="cl" style="top:92.1px">+ </span>
<span class="ln" style="top:104.96px">7</span><span class="cl" style="top:104.96px">+ <k>class</k> Admin2Controller <k>extends</k> Controller</span>
<span class="ln" style="top:117.82px">8</span><span class="cl" style="top:117.82px">+ {</span>
<span class="ln" style="top:130.68px">9</span><span class="cl" style="top:130.68px">+     /**</span>
<span class="ln" style="top:143.54px">10</span><span class="cl" style="top:143.54px">+      * Create a <k>new</k> controller instance.</span>
<span class="ln" style="top:156.4px">11</span><span class="cl" style="top:156.4px">+      *</span>
<span class="ln" style="top:169.26px">12</span><span class="cl" style="top:169.26px">+      * @<k>return</k> void</span>
<span class="ln" style="top:182.12px">13</span><span class="cl" style="top:182.12px">+      */</span>
<span class="ln" style="top:194.98px">14</span><span class="cl" style="top:194.98px">+     <k>public</k> <k>function</k> __construct()</span>
<span class="ln" style="top:207.84px">15</span><span class="cl" style="top:207.84px">+     {</span>
<span class="ln" style="top:220.7px">16</span><span class="cl" style="top:220.7px">+         $this-&gt;middleware(<s>'auth'</s>);</span>
<span class="ln" style="top:233.56px">17</span><span class="cl" style="top:233.56px">+     }</span>
<span class="ln" style="top:246.42px">18</span><span class="cl" style="top:246.42px">+ </span>
<span class="ln" style="top:259.28px">19</span><span class="cl" style="top:259.28px">+     /**</span>
<span class="ln" style="top:272.14px">20</span><span class="cl" style="top:272.14px">+      * Show the application dashboard.</span>
</div>
<div style="left:1423px;top:451px;width:17px;height:306px;background:#f0f0f0"></div><div style="left:1423px;top:468px;width:17px;height:188px;background:#cdcdcd"></div>
<svg style="left:1423px;top:451px" width="17" height="306" viewBox="0 0 17 306"><path d="M4.5 10.5L8.5 6.5L12.5 10.5M4.5 297.5L8.5 301.5L12.5 297.5" stroke="#505050" stroke-width="1.1" fill="none"/></svg>
<!-- DIFF-END -->
<svg id="arrow" style="left:1265px;top:115px" width="110" height="95" viewBox="1265 115 110 95"><path d="M1274.6 203.4L1350.6 131.6L1346.4 127.2L1364.2 121.6L1357.2 139.2L1353.6 135.4Z" fill="#f83a3a"/></svg>
<!-- frame -->
<div id="bT"></div><div id="bL"></div><div id="bR"></div><div id="bB"></div>
</body>
</html>
